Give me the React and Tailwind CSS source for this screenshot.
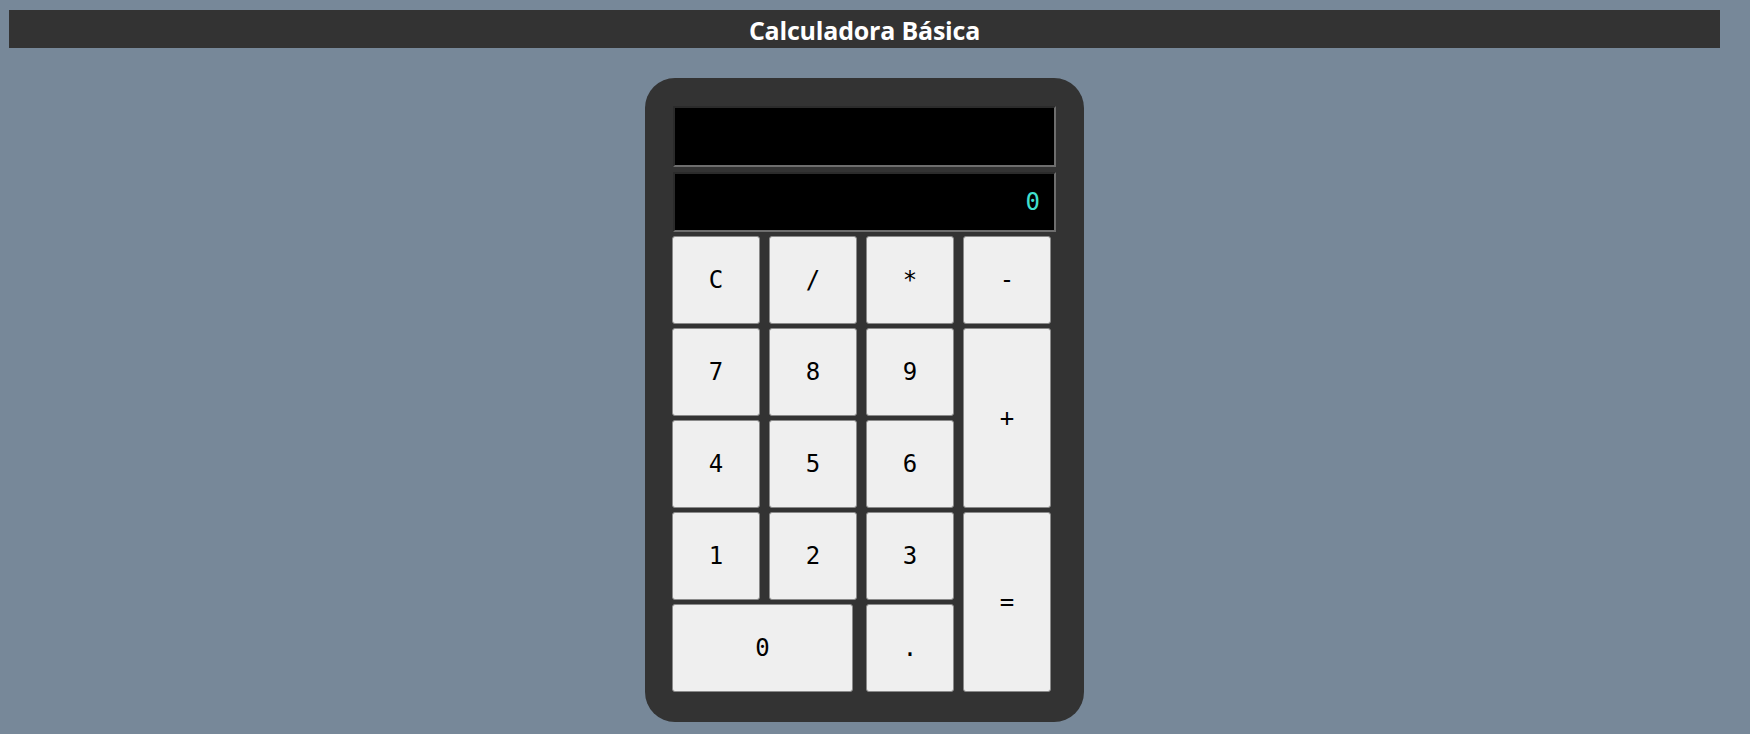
export default function App() {
  const mono = { fontFamily: "'DejaVu Sans Mono', 'Liberation Mono', monospace" }
  const btn = 'bg-[#efefef] border border-[#8a8a8a] rounded-[3px] text-black text-[24px] flex items-center justify-center'

  return (
    <div className="min-h-screen w-full bg-[#778899]">
      <div className="w-[1729px] pt-[10px] px-[9px]">
        <h1
          className="h-[38px] bg-[#333333] text-white text-[25px] font-bold text-center leading-[40px] tracking-[-0.2px]"
          style={{ fontFamily: "'Open Sans', 'Noto Sans', sans-serif" }}
        >
          Calculadora Básica
        </h1>

        <div className="flex justify-center mt-[30px]">
          <div className="w-[439px] h-[644px] bg-[#333333] rounded-[30px] pt-[28px] pl-[28px] pr-[28px]">
            <div className="w-[383px] h-[61px] bg-black border-2 border-t-[#2b2b2b] border-l-[#2b2b2b] border-b-[#6e6e6e] border-r-[#6e6e6e]" />
            <div
              className="w-[383px] h-[60px] mt-[5px] bg-black border-2 border-t-[#2b2b2b] border-l-[#2b2b2b] border-b-[#6e6e6e] border-r-[#6e6e6e] flex items-center justify-end pr-[14px] text-[#40e0d0] text-[24px]"
              style={mono}
            >
              0
            </div>

            <div
              className="grid grid-cols-[88px_88px_88px_88px] auto-rows-[88px] gap-x-[9px] gap-y-[4px] mt-[4px] -ml-px"
              style={mono}
            >
              <button className={btn}>C</button>
              <button className={btn}>/</button>
              <button className={btn}>*</button>
              <button className={btn}>-</button>
              <button className={btn}>7</button>
              <button className={btn}>8</button>
              <button className={btn}>9</button>
              <button className={`${btn} row-span-2`}>+</button>
              <button className={btn}>4</button>
              <button className={btn}>5</button>
              <button className={btn}>6</button>
              <button className={btn}>1</button>
              <button className={btn}>2</button>
              <button className={btn}>3</button>
              <button className={`${btn} row-span-2`}>=</button>
              <button className={`${btn} col-span-2 w-[181px]`}>0</button>
              <button className={btn}>.</button>
            </div>
          </div>
        </div>
      </div>
    </div>
  )
}
